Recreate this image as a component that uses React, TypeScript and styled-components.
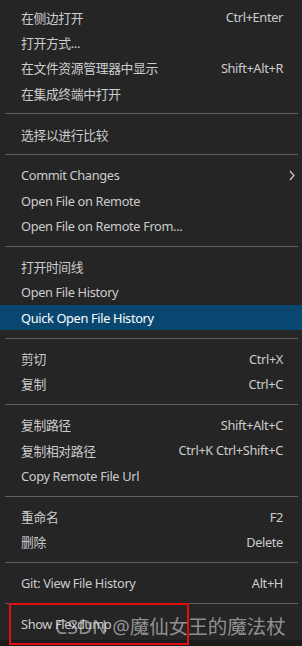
import styled, { createGlobalStyle } from 'styled-components';

const GlobalStyle = createGlobalStyle`
  body {
    margin: 0;
    background: #1e1e1e;
    font-family: 'Noto Sans', 'Noto Sans CJK SC', sans-serif;
  }
`;

const Page = styled.div`
  position: relative;
  width: 302px;
  height: 646px;
  overflow: hidden;
  background: #1b1b1b;
`;

const Menu = styled.div`
  width: 302px;
  height: 640px;
  background: #252526;
  padding-top: 4.5px;
  box-sizing: border-box;
  display: flex;
  flex-direction: column;
`;

const Item = styled.div<{ $active?: boolean }>`
  height: 25.3px;
  flex-shrink: 0;
  display: flex;
  align-items: center;
  padding: 0 19px 0 21px;
  font-size: 12.8px;
  letter-spacing: -0.35px;
  color: ${(p) => (p.$active ? '#ffffff' : '#cccccc')};
  background: ${(p) => (p.$active ? '#094771' : 'transparent')};
  position: relative;
`;

const Label = styled.span`
  flex: 1;
  white-space: nowrap;
`;

const Keys = styled.span`
  white-space: nowrap;
`;

const Chevron = styled.svg`
  position: absolute;
  right: 7px;
  top: 7px;
`;

const Separator = styled.div`
  height: 15.8px;
  flex-shrink: 0;
  display: flex;
  align-items: center;
  padding: 0 4px 0 5px;
  &::after {
    content: '';
    flex: 1;
    height: 1px;
    background: #5f5f5f;
  }
`;

const RedBox = styled.div`
  position: absolute;
  left: 9px;
  top: 603px;
  width: 176px;
  height: 38px;
  border: 2px solid #e01010;
`;

const Watermark = styled.div`
  position: absolute;
  left: 55px;
  top: 611px;
  font-size: 19.5px;
  color: rgba(215, 215, 215, 0.62);
  white-space: nowrap;
  font-family: 'Noto Sans', 'Noto Sans CJK SC', sans-serif;
`;

type Entry = { label: string; keys?: string; sub?: boolean; active?: boolean } | 'sep';

const entries: Entry[] = [
  { label: '在侧边打开', keys: 'Ctrl+Enter' },
  { label: '打开方式...' },
  { label: '在文件资源管理器中显示', keys: 'Shift+Alt+R' },
  { label: '在集成终端中打开' },
  'sep',
  { label: '选择以进行比较' },
  'sep',
  { label: 'Commit Changes', sub: true },
  { label: 'Open File on Remote' },
  { label: 'Open File on Remote From...' },
  'sep',
  { label: '打开时间线' },
  { label: 'Open File History' },
  { label: 'Quick Open File History', active: true },
  'sep',
  { label: '剪切', keys: 'Ctrl+X' },
  { label: '复制', keys: 'Ctrl+C' },
  'sep',
  { label: '复制路径', keys: 'Shift+Alt+C' },
  { label: '复制相对路径', keys: 'Ctrl+K Ctrl+Shift+C' },
  { label: 'Copy Remote File Url' },
  'sep',
  { label: '重命名', keys: 'F2' },
  { label: '删除', keys: 'Delete' },
  'sep',
  { label: 'Git: View File History', keys: 'Alt+H' },
  'sep',
  { label: 'Show Flexdump' },
];

export default function App() {
  return (
    <Page>
      <GlobalStyle />
      <Menu>
        {entries.map((e, i) =>
          e === 'sep' ? (
            <Separator key={i} />
          ) : (
            <Item key={i} $active={e.active}>
              <Label>{e.label}</Label>
              {e.keys && <Keys>{e.keys}</Keys>}
              {e.sub && (
                <Chevron width="6" height="11" viewBox="0 0 6 11">
                  <path d="M1 1l4 4.5L1 10" fill="none" stroke="#cccccc" strokeWidth="1.2" />
                </Chevron>
              )}
            </Item>
          )
        )}
      </Menu>
      <RedBox />
      <Watermark>CSDN @魔仙女王的魔法杖</Watermark>
    </Page>
  );
}
